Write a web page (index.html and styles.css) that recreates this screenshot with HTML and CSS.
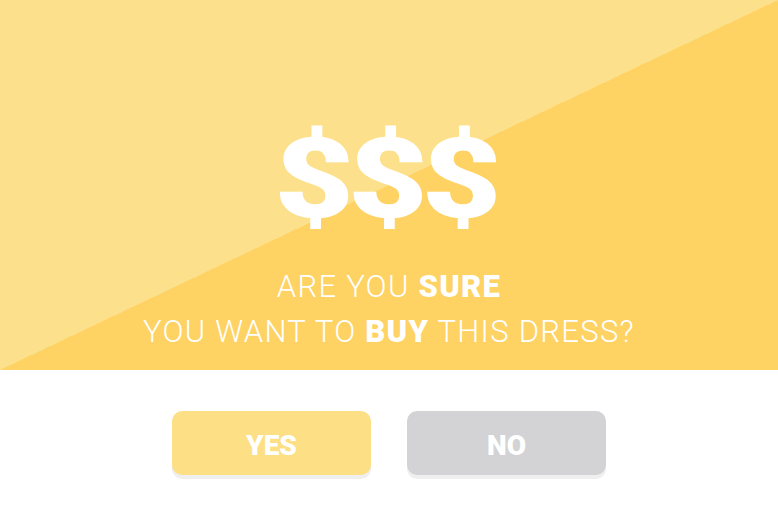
FILE: index.html
```html
<!DOCTYPE html>
<html>
<head>
<meta charset="utf-8">
<link rel="stylesheet" href="styles.css">
</head>
<body>
<div class="card">
  <div class="hero">
    <div class="price">$$$</div>
    <div class="question">
      <div class="line">ARE YOU <b>SURE</b></div>
      <div class="line">YOU WANT TO <b>BUY</b> THIS DRESS?</div>
    </div>
  </div>
  <div class="actions">
    <button class="btn btn-yes">YES</button>
    <button class="btn btn-no">NO</button>
  </div>
</div>
</body>
</html>
```

FILE: styles.css
```css
html, body {
  margin: 0;
  padding: 0;
  background: #ffffff;
}
.card {
  width: 778px;
  height: 516px;
  display: flex;
  flex-direction: column;
  font-family: Roboto, "Liberation Sans", sans-serif;
}
.hero {
  height: 370px;
  background: linear-gradient(to bottom right, #fde08b 50%, #fed263 50%);
  display: flex;
  flex-direction: column;
  align-items: center;
  color: #ffffff;
}
.price {
  margin-top: 109px;
  margin-right: 8px;
  font-family: Roboto, "Liberation Sans", sans-serif;
  font-size: 112px;
  font-weight: 900;
  line-height: 140px;
  letter-spacing: -5px;
  height: 140px;
  transform: scaleX(1.23);
}
.question {
  margin-top: 15px;
  text-align: center;
  font-size: 31px;
  font-weight: 300;
  line-height: 45px;
  letter-spacing: 1.3px;
}
.question b {
  font-weight: 900;
}
.actions {
  display: flex;
  justify-content: center;
  gap: 36px;
  padding-top: 41px;
}
.btn {
  width: 199px;
  height: 64px;
  border: none;
  border-radius: 10px;
  color: #ffffff;
  font-family: Roboto, "Liberation Sans", sans-serif;
  font-size: 28px;
  font-weight: 900;
  box-shadow: 0 4px 0 #efefef;
  padding: 4px 0 0 0;
}
.btn-yes {
  background: #fddf85;
}
.btn-no {
  background: #d3d3d5;
}
```
